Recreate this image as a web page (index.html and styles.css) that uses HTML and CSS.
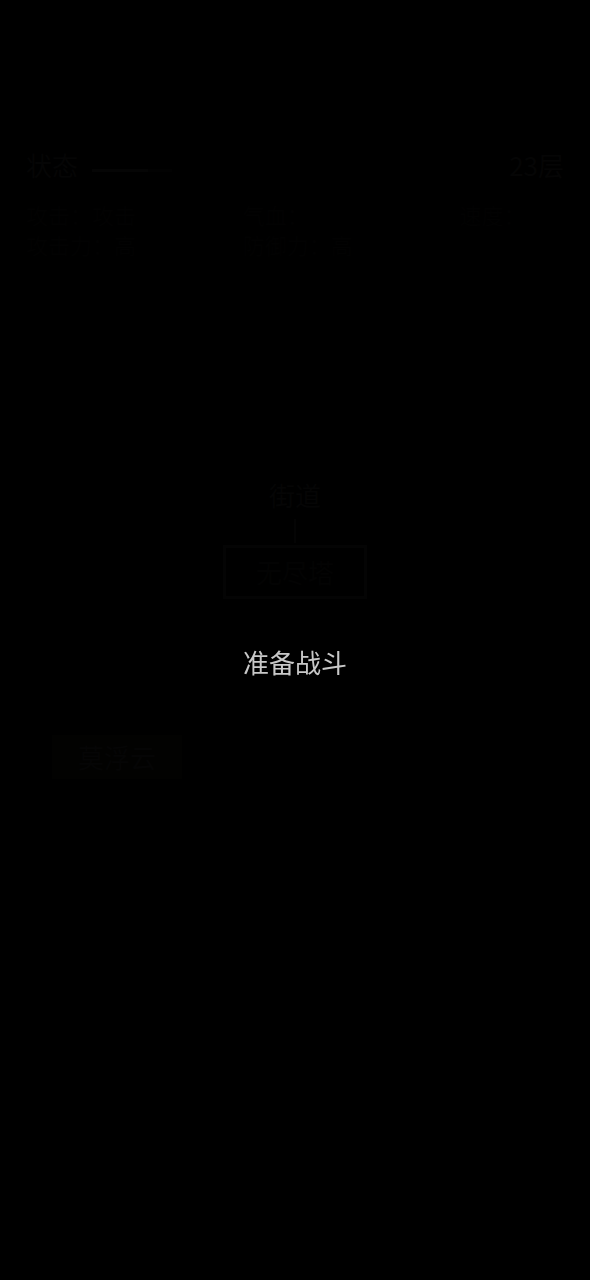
FILE: index.html
```html
<!DOCTYPE html>
<html lang="zh-CN">
<head>
  <meta charset="UTF-8">
  <meta name="viewport" content="width=device-width, initial-scale=1.0">
  <title>准备战斗</title>
  <link rel="stylesheet" href="styles.css">
</head>
<body>
  <!-- Map screen, dimmed behind the overlay -->
  <main class="scene">
    <header class="top-bar">
      <span>状态</span>
      <div class="exp-bar"><div class="exp-fill" style="width: 70%"></div></div>
      <span class="floor">23层</span>
    </header>

    <div class="stats">
      <span>攻击：攻击</span>
      <span>气血：</span>
      <span>速度：</span>
      <span>攻击力：高</span>
      <span>防御力：高</span>
    </div>

    <section class="map">
      <div class="place">街道</div>
      <div class="path"></div>
      <button type="button" class="node">无尽塔</button>
    </section>

    <button type="button" class="person">莫浮云</button>
  </main>

  <!-- Battle overlay -->
  <div class="overlay">
    <p class="message">准备战斗</p>
  </div>
</body>
</html>
```

FILE: styles.css
```css
body {
  margin: 0;
  min-height: 100vh;
  background-color: #000;
  color: #050505;
  font-family: "Noto Sans CJK SC", sans-serif;
  font-size: 26px;
  line-height: 36px;
}

.scene {
  padding: 147px 26px 0;
}

.top-bar {
  display: flex;
  align-items: center;
  gap: 14px;
}

.exp-bar {
  width: 80px;
  height: 3px;
  margin-top: 10px;
  background-color: #020202;
}

.exp-fill {
  height: 3px;
  background-color: #050505;
}

.floor {
  margin-left: auto;
}

.stats {
  display: grid;
  grid-template-columns: 2fr 2fr 1fr;
  gap: 0 8px;
  margin-top: 16px;
  color: #020202;
  font-size: 22px;
  line-height: 30px;
}

.map {
  display: flex;
  flex-direction: column;
  align-items: center;
  margin-top: 218px;
}

.path {
  width: 2px;
  height: 24px;
  margin: 6px 0 2px;
  background-color: #040404;
}

.node,
.person {
  font-family: inherit;
  font-size: 26px;
  line-height: 36px;
  cursor: pointer;
}

.node {
  padding: 6px 30px;
  border: 3px solid #040404;
  background-color: #000;
  color: #030303;
}

.person {
  display: block;
  margin: 136px 0 0 26px;
  padding: 4px 26px;
  border: none;
  background-color: #020201;
  color: #050505;
}

.overlay {
  position: fixed;
  inset: 0;
  display: flex;
  align-items: center;
  justify-content: center;
  padding-top: 44px;
}

.message {
  margin: 0;
  color: #c8c8c8;
  font-size: 26px;
}
```
